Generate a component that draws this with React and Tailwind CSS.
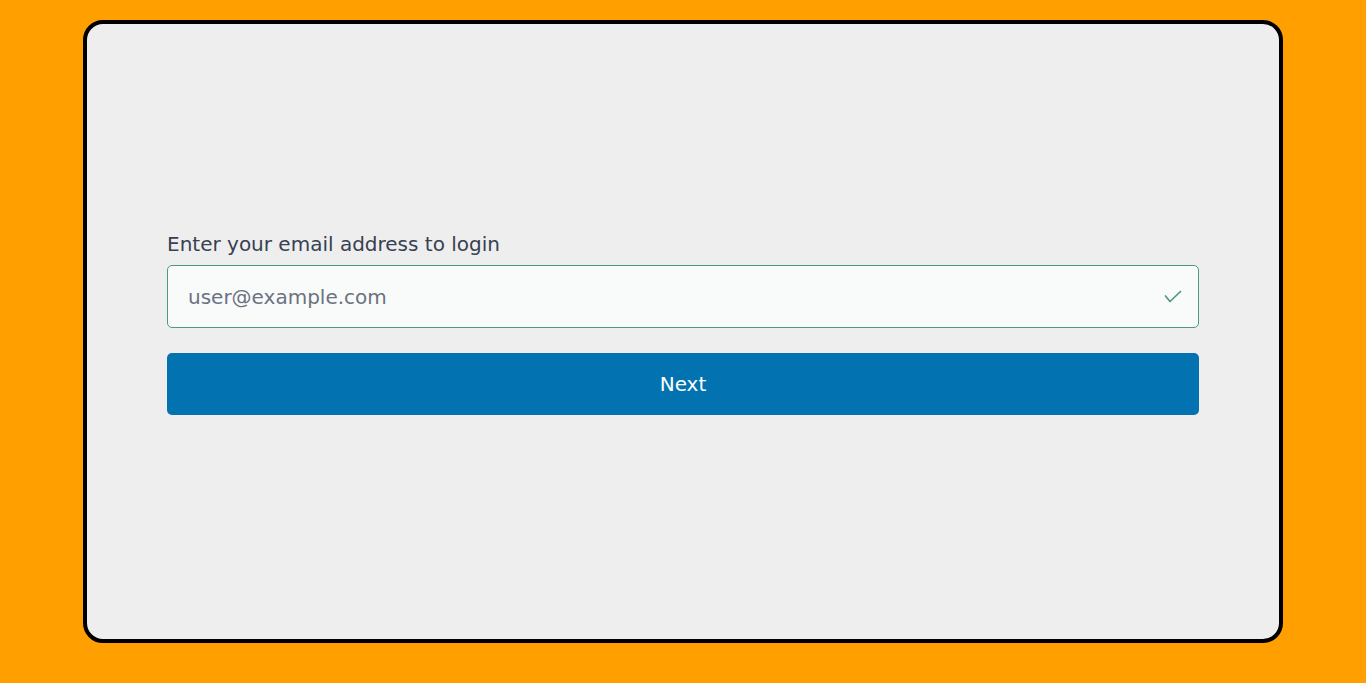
export default function App() {
  return (
    <div className="min-h-screen bg-[#ffa000] px-[83px] pt-5 pb-10 [font-family:'DejaVu_Sans',sans-serif]">
      <div className="h-[623px] rounded-[20px] border-4 border-black bg-[#eeeeee] flex flex-col justify-center px-20 pb-5">
        <label className="text-[20px] leading-[30px] text-[#374151] mb-1.5">Enter your email address to login</label>
        <div className="relative">
          <input
            type="email"
            placeholder="user@example.com"
            className="w-full h-[63px] rounded-[5px] border border-[#4a9a86] bg-[#f9fbfb] px-5 pt-px text-[20px] text-[#374151] placeholder:text-[#6b7280] outline-none"
          />
          <svg className="absolute right-[17px] top-[25px]" width="18" height="13" viewBox="0 0 18 13" fill="none" stroke="#4a9a86" strokeWidth="1.7" strokeLinecap="round" strokeLinejoin="round">
            <path d="M1.5 6l4.5 5.5L16.5 1.5" />
          </svg>
        </div>
        <button className="mt-[25px] h-[62px] w-full rounded-[5px] bg-[#0272b0] text-[20px] text-white">Next</button>
      </div>
    </div>
  );
}
